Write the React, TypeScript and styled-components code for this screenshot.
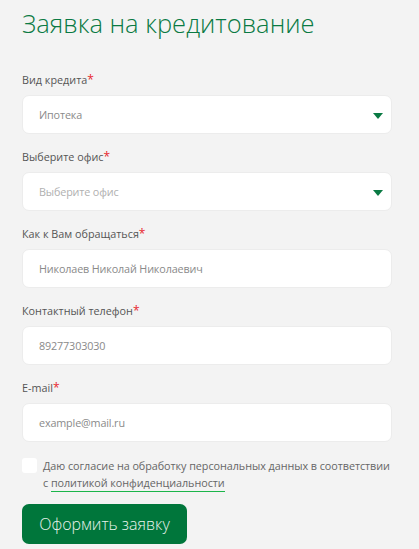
import styled, { createGlobalStyle } from 'styled-components'

const GlobalStyle = createGlobalStyle`
    html, body {
        margin: 0;
        padding: 0;
        background: #f3f3f3;
    }
    body {
        font-family: 'Open Sans', 'Noto Sans', sans-serif;
    }
`

type Field = {
    label: string
    value: string
    select?: boolean
    muted?: boolean
}

const fields: Field[] = [
    { label: 'Вид кредита', value: 'Ипотека', select: true },
    { label: 'Выберите офис', value: 'Выберите офис', select: true, muted: true },
    { label: 'Как к Вам обращаться', value: 'Николаев Николай Николаевич' },
    { label: 'Контактный телефон', value: '89277303030' },
    { label: 'E-mail', value: 'example@mail.ru' },
]

function App() {
    return (
        <>
            <GlobalStyle />
            <Wrapper>
                <Title>Заявка на кредитование</Title>
                <Fields>
                    {fields.map((f) => (
                        <Group key={f.label}>
                            <Label>
                                {f.label}
                                <Star>*</Star>
                            </Label>
                            <Box>
                                <Value $muted={f.muted}>{f.value}</Value>
                                {f.select && <Arrow />}
                            </Box>
                        </Group>
                    ))}
                </Fields>
                <Consent>
                    <Check />
                    <ConsentText>
                        Даю согласие на обработку персональных данных в соответствии с{' '}
                        <Policy>политикой конфиденциальности</Policy>
                    </ConsentText>
                </Consent>
                <Submit>Оформить заявку</Submit>
            </Wrapper>
        </>
    )
}

export default App

const Wrapper = styled.main`
    width: 370px;
    padding: 0 27px 0 22px;
    box-sizing: content-box;
`

const Title = styled.h1`
    margin: 0;
    padding-top: 5px;
    font-size: 25.5px;
    line-height: 36px;
    font-weight: 300;
    color: #0a7a43;
`

const Fields = styled.div`
    display: flex;
    flex-direction: column;
    gap: 15px;
    margin-top: 31px;
`

const Group = styled.div`
    display: flex;
    flex-direction: column;
    gap: 7px;
`

const Label = styled.div`
    font-size: 10.8px;
    line-height: 16px;
    color: #555;
`

const Star = styled.span`
    color: #e8262e;
    font-size: 12px;
`

const Box = styled.div`
    display: flex;
    align-items: center;
    justify-content: space-between;
    height: 39px;
    padding: 0 8px 0 16px;
    background: #fff;
    border: 1px solid #ececec;
    border-radius: 7px;
    box-sizing: border-box;
`

const Value = styled.span<{ $muted?: boolean }>`
    font-size: 10.8px;
    letter-spacing: -0.15px;
    color: ${(p) => (p.$muted ? '#b0b0b0' : '#8a8a8a')};
`

const Arrow = styled.span`
    width: 0;
    height: 0;
    border-left: 5.5px solid transparent;
    border-right: 5.5px solid transparent;
    border-top: 6px solid #0a7a43;
    margin-top: 2px;
`

const Consent = styled.div`
    display: flex;
    gap: 6px;
    margin-top: 15px;
`

const Check = styled.span`
    flex: none;
    width: 15px;
    height: 15px;
    background: #fff;
    border-radius: 3px;
    margin-top: 1px;
`

const ConsentText = styled.p`
    margin: 0;
    font-size: 10.8px;
    letter-spacing: -0.05px;
    line-height: 17px;
    color: #666;
`

const Policy = styled.span`
    border-bottom: 1px solid #1cb54a;
    padding-bottom: 1px;
`

const Submit = styled.button`
    display: block;
    margin-top: 13px;
    width: 165px;
    height: 40px;
    border: none;
    border-radius: 7px;
    background: #00763b;
    color: #e8f3ec;
    font-family: 'Open Sans', 'Noto Sans', sans-serif;
    font-weight: 300;
    font-size: 16px;
    padding: 0;
`
